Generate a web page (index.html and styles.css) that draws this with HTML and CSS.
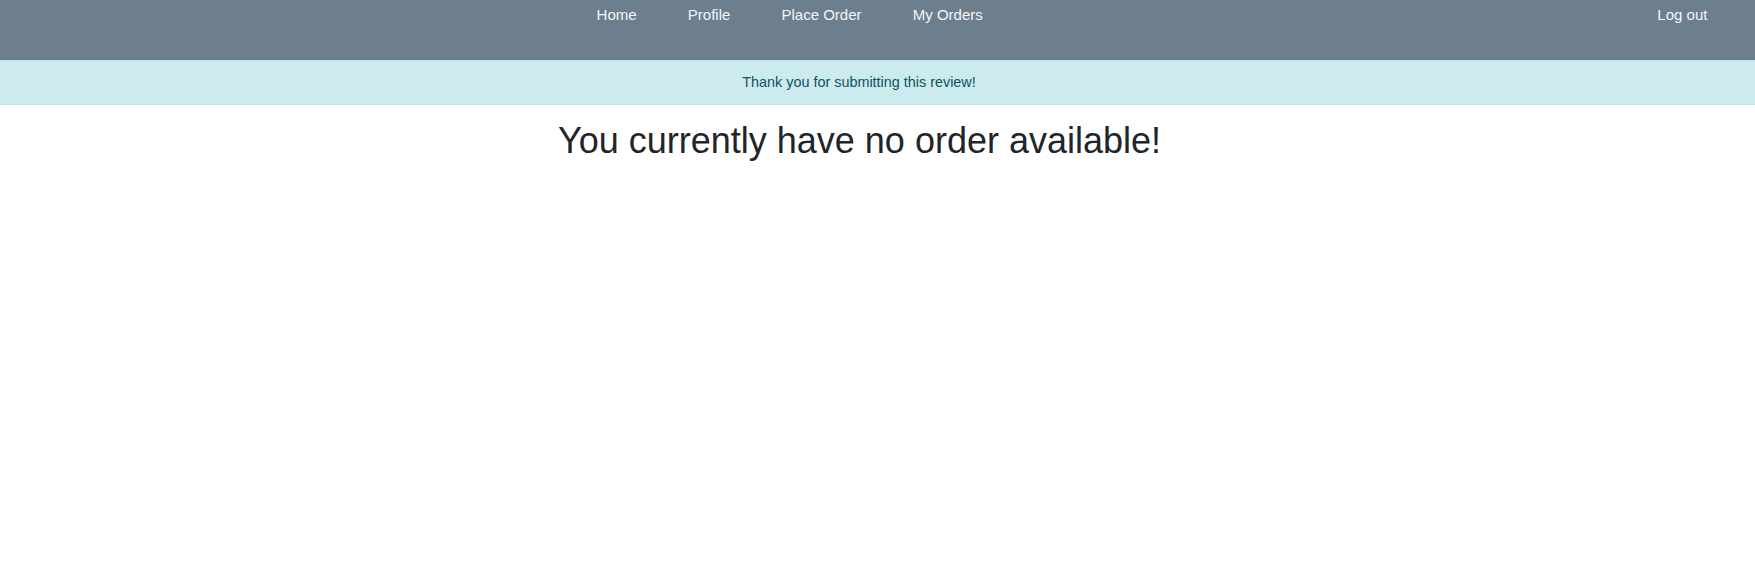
FILE: index.html
```html
<!DOCTYPE html>
<html lang="en">
<head>
<meta charset="utf-8">
<title>My Orders</title>
<link rel="stylesheet" href="styles.css">
</head>
<body>
<nav class="topnav">
  <ul class="nav-main">
    <li><a href="#">Home</a></li>
    <li><a href="#">Profile</a></li>
    <li><a href="#">Place Order</a></li>
    <li><a href="#">My Orders</a></li>
  </ul>
  <ul class="nav-right">
    <li><a href="#">Log out</a></li>
  </ul>
</nav>
<div class="alert">Thank you for submitting this review!</div>
<h1 class="empty">You currently have no order available!</h1>
</body>
</html>
```
FILE: styles.css
```css
html, body {
  margin: 0;
  padding: 0;
  background: #fff;
  font-family: "Liberation Sans", Arial, sans-serif;
}
.topnav {
  display: flex;
  align-items: flex-start;
  height: 60px;
  box-sizing: border-box;
  background: #6d7e8d;
  padding-top: 6px;
}
.topnav ul {
  display: flex;
  list-style: none;
  margin: 0;
  padding: 0;
}
.nav-main {
  margin-left: 571px !important;
}
.nav-right {
  margin-left: auto !important;
  margin-right: 22px !important;
}
.topnav a {
  display: block;
  padding: 0 25.6px;
  color: #f4f6f8;
  text-decoration: none;
  font-size: 15px;
  line-height: 17px;
}
.alert {
  background: #cdeaee;
  border-top: 1px solid #bee5eb;
  border-bottom: 1px solid #bee5eb;
  color: #0c5460;
  font-size: 14.4px;
  line-height: 21px;
  padding: 11px 37px 11px 0;
  text-align: center;
}
.empty {
  margin: 14px 36px 0 0;
  text-align: center;
  font-weight: normal;
  font-size: 36px;
  line-height: 43px;
  color: #212529;
}
```
